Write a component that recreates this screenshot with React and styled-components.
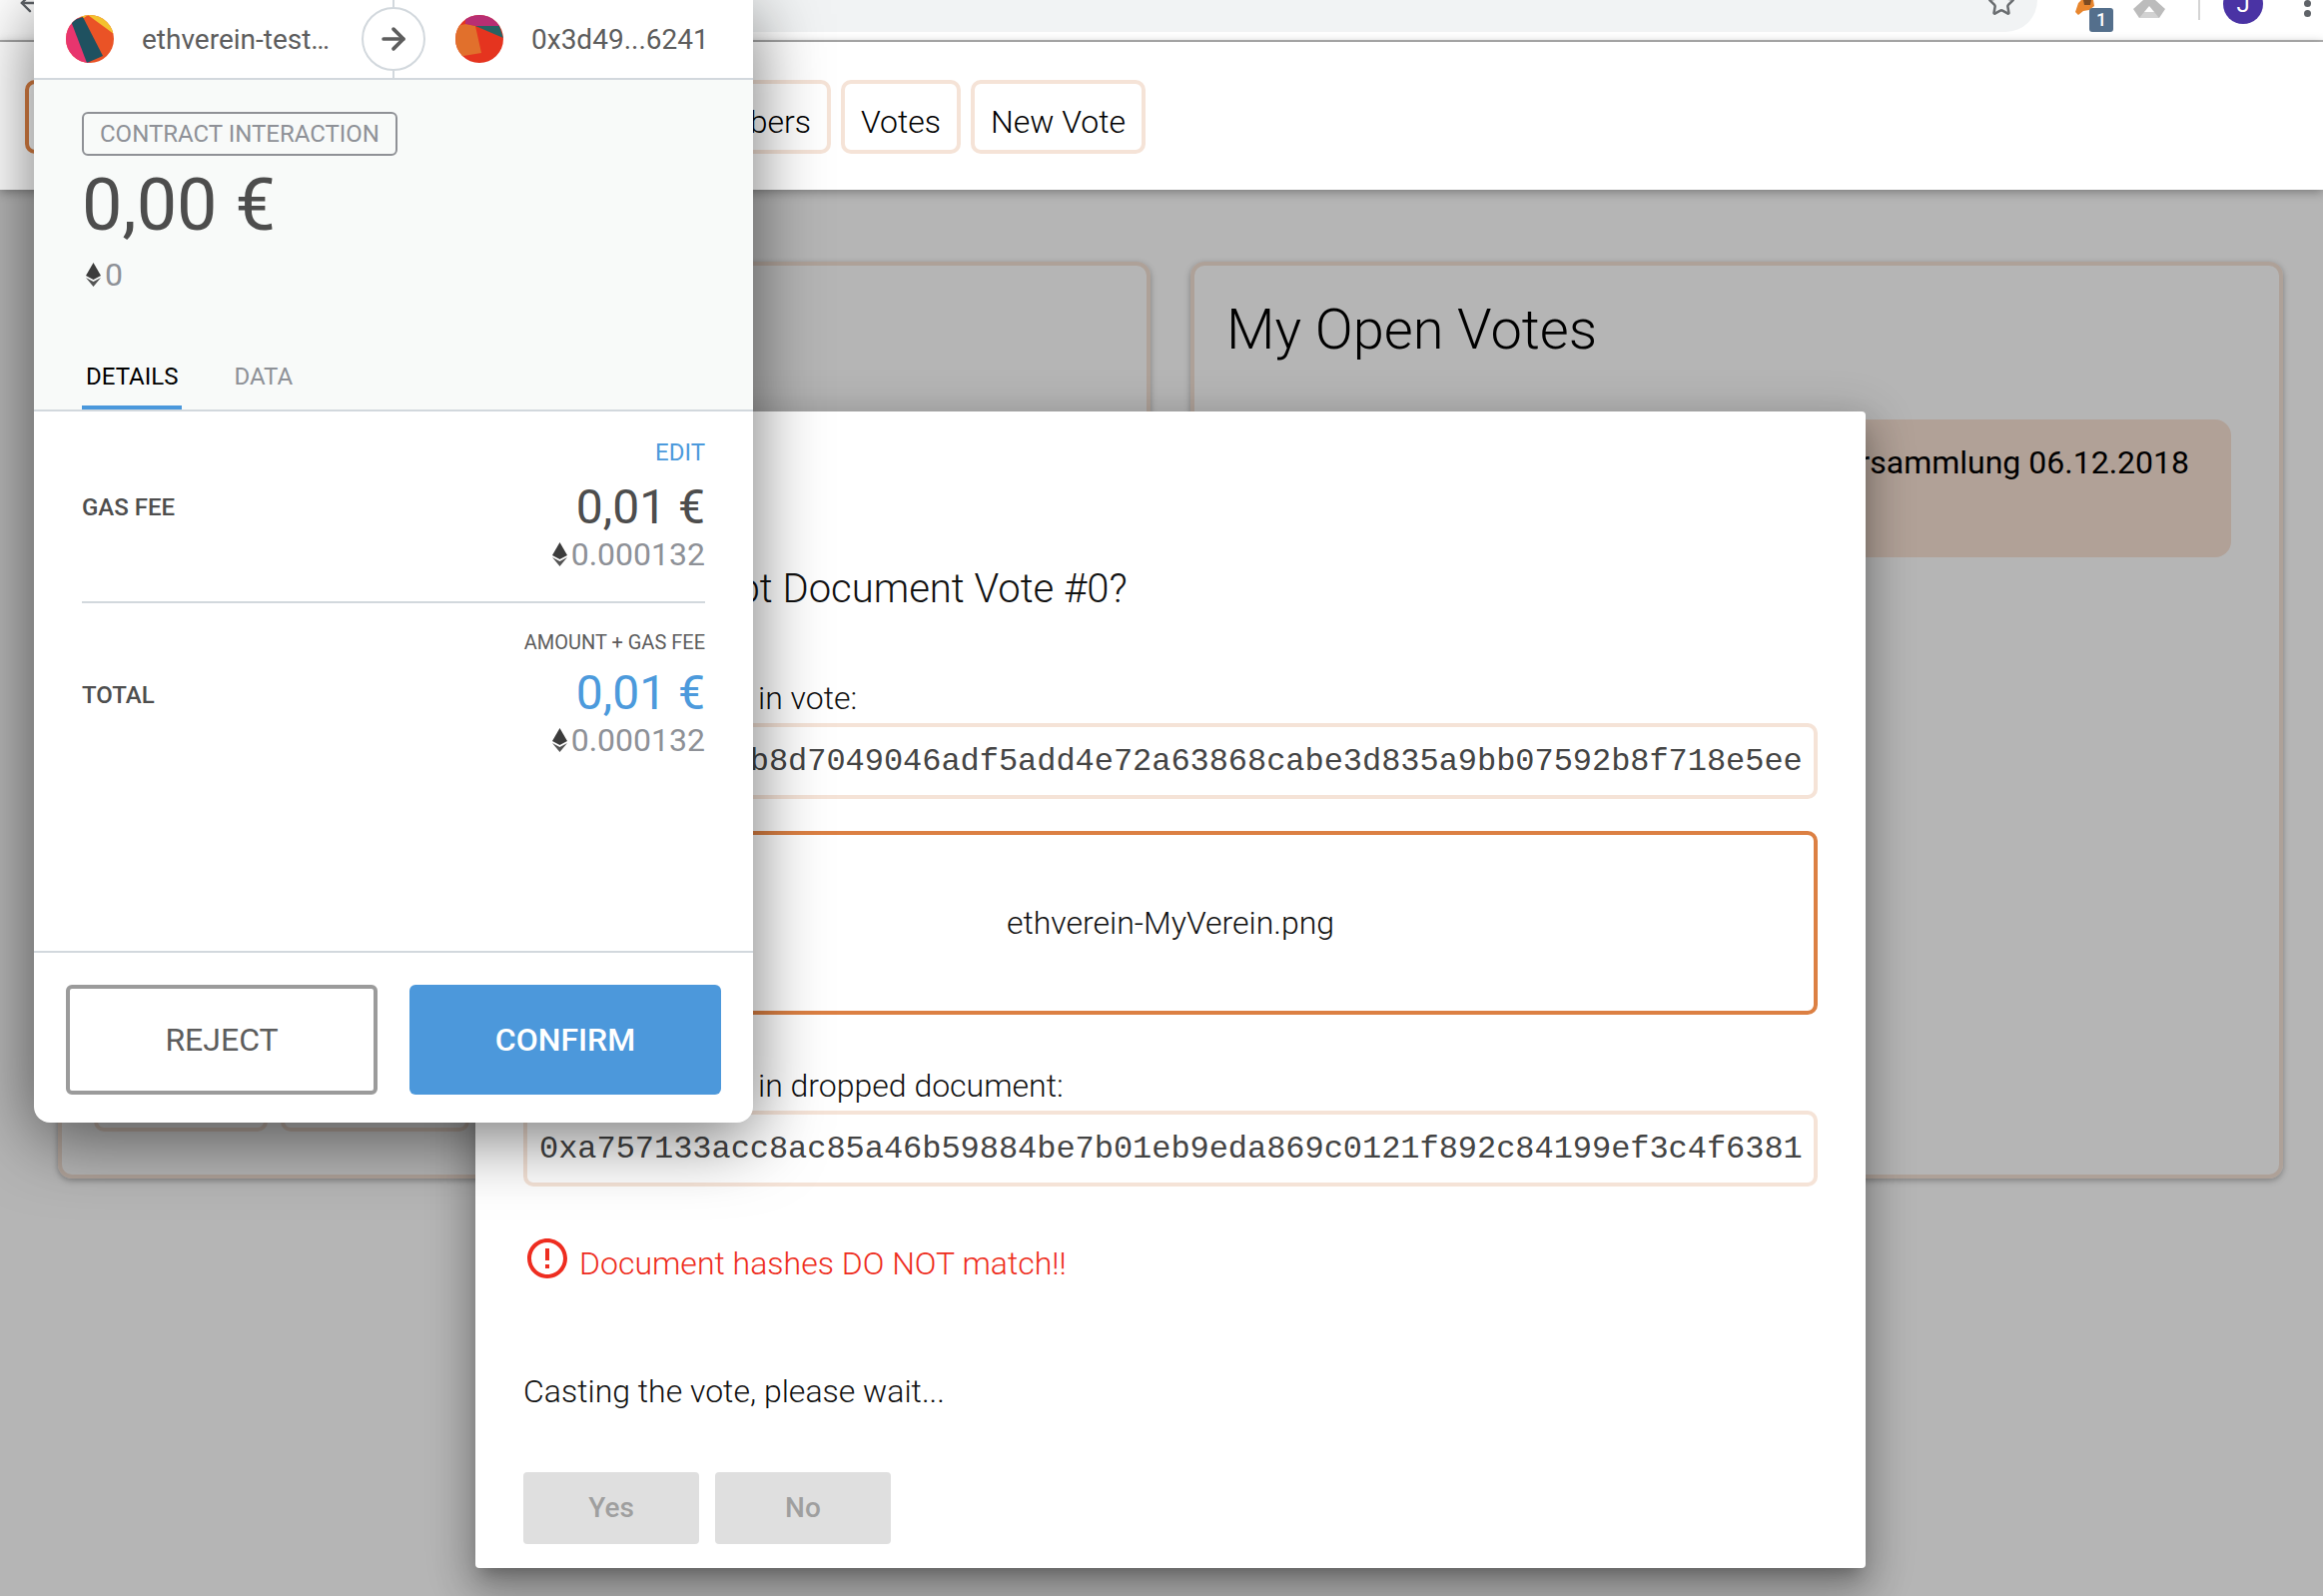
import React from "react";
import styled, { createGlobalStyle } from "styled-components";
import { ArrowLeft, ArrowRight, Star } from "lucide-react";
import { MdErrorOutline } from "react-icons/md";

const GlobalStyle = createGlobalStyle`
  html, body { margin: 0; padding: 0; background: #fff; }
  * { box-sizing: border-box; }
  body { font-family: Roboto, "Liberation Sans", sans-serif; }
`;

function EthIcon() {
  return (
    <EthSvg viewBox="0 0 15 24">
      <polygon points="7.5,0 15,13 7.5,17 0,13" fill="#3c3c3c" />
      <polygon points="0,15 7.5,19 15,15 7.5,24" fill="#555" />
    </EthSvg>
  );
}

function AccountIconA() {
  return (
    <AvatarSvg viewBox="0 0 48 48">
      <rect width="48" height="48" fill="#ea5326" />
      <polygon points="0,0 12,0 24,48 0,48" fill="#e8356e" />
      <polygon points="5,6 17,2 37,41 21,48" fill="#1f5160" />
      <polygon points="22,0 48,0 48,19" fill="#f3c22f" />
      <polygon points="14,0 22,0 18,3" fill="#f3c22f" />
    </AvatarSvg>
  );
}

function AccountIconB() {
  return (
    <AvatarSvg viewBox="0 0 48 48">
      <rect width="48" height="48" fill="#e5341f" />
      <polygon points="0,11 11,9 20,11 26,38 8,41 0,44" fill="#e1702c" />
      <polygon points="10,0 48,0 44,11 20,11 10,9" fill="#b82e73" />
      <polygon points="20,11 44,11 48,23" fill="#276262" />
    </AvatarSvg>
  );
}

function FoxIcon() {
  return (
    <ExtensionSvg viewBox="0 0 20 16" $width={20} $height={16}>
      <polygon points="0,12 3,3 6,0 18,0 19,6 14,10 8,11 3,15" fill="#e8862e" />
      <polygon points="8,0 16,0 15,5 9,5" fill="#7a4a22" />
    </ExtensionSvg>
  );
}

function DriveIcon() {
  return (
    <ExtensionSvg viewBox="0 0 32 18" $width={32} $height={18}>
      <polygon points="10,0 22,0 32,9 26,18 6,18 0,9" fill="#bcbcbc" />
      <polygon points="16,6 21,12 11,12" fill="#fff" />
      <polygon points="6,18 11,12 21,12 26,18" fill="#d2d2d2" />
    </ExtensionSvg>
  );
}

function Amounts({ label, value, blue, eth }) {
  return (
    <AmountColumn>
      <SmallNote $blue={label === "EDIT"}>{label}</SmallNote>
      <FeeValue $blue={blue}>{value}</FeeValue>
      <EthRow>
        <EthIcon />
        <EthValue>{eth}</EthValue>
      </EthRow>
    </AmountColumn>
  );
}

function App() {
  return (
    <Page>
      <GlobalStyle />
      <BrowserBar>
        <ArrowLeft size={28} color="#5f6368" style={{ marginTop: -11 }} />
        <UrlPill>
          <Star size={28} color="#6a6d70" strokeWidth={2.2} />
        </UrlPill>
        <Extensions>
          <FoxSlot>
            <FoxIcon />
            <Badge>1</Badge>
          </FoxSlot>
          <DriveIcon />
          <BarDivider />
          <Profile>J</Profile>
          <Dots>
            <i />
            <i />
          </Dots>
        </Extensions>
      </BrowserBar>

      <Nav>
        <TabRow>
          <NavTab $active>Home</NavTab>
          <NavTab>Members</NavTab>
          <NavTab>Votes</NavTab>
          <NavTab>New Vote</NavTab>
        </TabRow>
      </Nav>

      <Main>
        <Card>
          <CardActions>
            <GhostButton $width={174} />
            <GhostButton $width={189} />
          </CardActions>
        </Card>
        <Card>
          <CardTitle>My Open Votes</CardTitle>
          <VoteItem>Mitgliederversammlung 06.12.2018</VoteItem>
        </Card>
      </Main>

      <Backdrop />

      <Modal>
        <ModalTitle>Do you accept Document Vote #0?</ModalTitle>
        <FieldLabel $top={65}>Document Hash in vote:</FieldLabel>
        <HashField>0x3e91c07a2b8d7049046adf5add4e72a63868cabe3d835a9bb07592b8f718e5ee</HashField>
        <DropZone>ethverein-MyVerein.png</DropZone>
        <FieldLabel $top={51}>Document Hash in dropped document:</FieldLabel>
        <HashField>0xa757133acc8ac85a46b59884be7b01eb9eda869c0121f892c84199ef3c4f6381</HashField>
        <ErrorRow>
          <MdErrorOutline size={48} color="#ee2d20" />
          <ErrorText>Document hashes DO NOT match!!</ErrorText>
        </ErrorRow>
        <WaitText>Casting the vote, please wait...</WaitText>
        <ModalButtons>
          <DisabledButton>Yes</DisabledButton>
          <DisabledButton>No</DisabledButton>
        </ModalButtons>
      </Modal>

      <Popup>
        <PopupHeader>
          <Party>
            <AccountIconA />
            <PartyName>ethverein-test…</PartyName>
          </Party>
          <ArrowSlot>
            <ArrowCircle>
              <ArrowRight size={34} color="#5d5d5d" strokeWidth={2.6} />
            </ArrowCircle>
          </ArrowSlot>
          <Party $right>
            <AccountIconB />
            <PartyName>0x3d49...6241</PartyName>
          </Party>
        </PopupHeader>

        <Summary>
          <TypeTag>CONTRACT INTERACTION</TypeTag>
          <BigAmount>0,00 €</BigAmount>
          <EthRow $left>
            <EthIcon />
            <EthValue>0</EthValue>
          </EthRow>
          <PopupTabs>
            <PopupTab $active>DETAILS</PopupTab>
            <PopupTab>DATA</PopupTab>
          </PopupTabs>
        </Summary>

        <Details>
          <FeeRow>
            <FeeLabel $top={55}>GAS FEE</FeeLabel>
            <Amounts label="EDIT" value="0,01 €" eth="0.000132" />
          </FeeRow>
          <FeeRow $last>
            <FeeLabel $top={51}>TOTAL</FeeLabel>
            <Amounts label="AMOUNT + GAS FEE" value="0,01 €" eth="0.000132" blue />
          </FeeRow>
        </Details>

        <PopupFooter>
          <RejectButton>REJECT</RejectButton>
          <ConfirmButton>CONFIRM</ConfirmButton>
        </PopupFooter>
      </Popup>
    </Page>
  );
}

export default App;

//styling:

const Page = styled.div`
  position: relative;
  width: 2326px;
  height: 1598px;
  overflow: hidden;
  background: #fff;
`;

const BrowserBar = styled.div`
  position: relative;
  z-index: 3;
  height: 42px;
  display: flex;
  align-items: flex-start;
  padding-left: 16px;
  background: #fff;
  border-bottom: 2px solid #b4b4b4;
  overflow: hidden;
`;

const UrlPill = styled.div`
  width: 1840px;
  height: 32px;
  margin-left: 156px;
  padding-right: 22px;
  display: flex;
  justify-content: flex-end;
  background: #f1f3f4;
  border-radius: 0 0 32px 0;
  svg {
    margin-top: -11px;
  }
`;

const Extensions = styled.div`
  display: flex;
  align-items: flex-start;
  margin-left: 38px;
`;

const FoxSlot = styled.div`
  position: relative;
  width: 38px;
  height: 32px;
`;

const Badge = styled.div`
  position: absolute;
  left: 14px;
  top: 8px;
  width: 24px;
  height: 24px;
  border-radius: 3px;
  background: #546f8c;
  color: #fff;
  font-size: 18px;
  font-weight: 500;
  line-height: 24px;
  text-align: center;
`;

const ExtensionSvg = styled.svg`
  display: block;
  flex: none;
  width: ${(p) => p.$width}px;
  height: ${(p) => p.$height}px;
  ${Extensions} > & {
    margin-left: 20px;
  }
`;

const BarDivider = styled.div`
  width: 2px;
  height: 20px;
  margin-left: 33px;
  background: #d4d4d4;
`;

const Profile = styled.div`
  width: 40px;
  height: 40px;
  margin: -16px 0 0 23px;
  border-radius: 50%;
  background: #4a33a4;
  color: #fff;
  font-size: 24px;
  line-height: 40px;
  text-align: center;
`;

const Dots = styled.div`
  margin-left: 41px;
  display: flex;
  flex-direction: column;
  gap: 3px;
  i {
    display: block;
    width: 7px;
    height: 7px;
    border-radius: 50%;
    background: #5f6368;
  }
`;

const Nav = styled.div`
  position: relative;
  z-index: 3;
  height: 148px;
  padding: 38px 0 0 25px;
  background: #fff;
  box-shadow: 0 2px 10px rgba(0, 0, 0, 0.35);
`;

const TabRow = styled.div`
  width: 1122px;
  display: flex;
  gap: 10px;
`;

const NavTab = styled.div`
  flex: ${(p) => (p.$active ? 1 : "none")};
  height: 74px;
  padding: 15px 16px 0;
  border: 4px solid ${(p) => (p.$active ? "#dc8043" : "#f5e3d7")};
  border-radius: 10px;
  color: #000;
  font-size: 32px;
  font-weight: 300;
  line-height: 46px;
`;

const Main = styled.div`
  display: grid;
  grid-template-columns: 1094px 1094px;
  gap: 40px;
  padding: 72px 0 0 58px;
`;

const Card = styled.div`
  height: 918px;
  display: flex;
  flex-direction: column;
  padding: 0 48px 0 32px;
  border: 4px solid #f5e3d7;
  border-radius: 14px;
  box-shadow: 0 2px 6px rgba(0, 0, 0, 0.3);
`;

const CardActions = styled.div`
  margin-top: auto;
  padding-bottom: 43px;
  display: flex;
  gap: 13px;
`;

const GhostButton = styled.div`
  width: ${(p) => p.$width}px;
  height: 76px;
  border: 4px solid #f5e3d7;
  border-radius: 10px;
`;

const CardTitle = styled.h2`
  margin: 31px 0 0;
  color: #000;
  font-size: 56px;
  font-weight: 300;
  line-height: 66px;
`;

const VoteItem = styled.div`
  height: 138px;
  margin-top: 57px;
  padding: 23px 42px 0 0;
  border-radius: 16px;
  background: #fae3d5;
  color: #000;
  font-size: 32px;
  line-height: 40px;
  text-align: right;
`;

const Backdrop = styled.div`
  position: absolute;
  inset: 0;
  z-index: 2;
  background: rgba(0, 0, 0, 0.29);
`;

const Modal = styled.div`
  position: absolute;
  left: 476px;
  top: 412px;
  z-index: 4;
  width: 1392px;
  height: 1158px;
  padding: 154px 48px 24px;
  border-radius: 4px;
  background: #fff;
  box-shadow: 0 24px 38px 3px rgba(0, 0, 0, 0.2),
    0 9px 46px 8px rgba(0, 0, 0, 0.16), 0 11px 15px -7px rgba(0, 0, 0, 0.25);
`;

const ModalTitle = styled.h4`
  margin: 0;
  color: #111;
  font-size: 40px;
  font-weight: 300;
  line-height: 48px;
`;

const FieldLabel = styled.div`
  margin-top: ${(p) => p.$top}px;
  color: #111;
  font-size: 32px;
  font-weight: 300;
  line-height: 40px;
`;

const HashField = styled.div`
  height: 76px;
  margin-top: 5px;
  padding: 0 12px;
  display: flex;
  align-items: center;
  border: 4px solid #f5e3d7;
  border-radius: 10px;
  color: #444;
  font-family: "Liberation Mono", monospace;
  font-size: 32px;
  letter-spacing: -0.04px;
  white-space: nowrap;
`;

const DropZone = styled.div`
  height: 184px;
  margin-top: 32px;
  display: flex;
  align-items: center;
  justify-content: center;
  border: 4px solid #dc8043;
  border-radius: 10px;
  color: #111;
  font-size: 32px;
  font-weight: 300;
`;

const ErrorRow = styled.div`
  margin-top: 48px;
  display: flex;
  gap: 8px;
`;

const ErrorText = styled.div`
  padding-top: 9px;
  color: #ee2d20;
  font-size: 32px;
  font-weight: 300;
  line-height: 40px;
`;

const WaitText = styled.div`
  margin-top: 88px;
  color: #111;
  font-size: 32px;
  font-weight: 300;
  line-height: 40px;
`;

const ModalButtons = styled.div`
  margin-top: 61px;
  display: flex;
  gap: 16px;
`;

const DisabledButton = styled.div`
  width: 176px;
  height: 72px;
  border-radius: 4px;
  background: #dfdfdf;
  color: #9f9f9f;
  font-size: 28px;
  font-weight: 500;
  line-height: 72px;
  text-align: center;
`;

const Popup = styled.div`
  position: absolute;
  left: 34px;
  top: 0;
  z-index: 5;
  width: 720px;
  height: 1124px;
  display: flex;
  flex-direction: column;
  border-radius: 0 0 16px 16px;
  background: #fff;
  box-shadow: 0 14px 70px rgba(0, 0, 0, 0.55);
`;

const PopupHeader = styled.div`
  height: 80px;
  display: grid;
  grid-template-columns: 1fr 64px 1fr;
  border-bottom: 2px solid #d2d8dd;
`;

const Party = styled.div`
  display: flex;
  align-items: center;
  gap: 28px;
  padding-left: ${(p) => (p.$right ? 30 : 32)}px;
`;

const AvatarSvg = styled.svg`
  flex: none;
  width: 48px;
  height: 48px;
  border-radius: 50%;
`;

const PartyName = styled.div`
  color: #5d5d5d;
  font-size: 28px;
  white-space: nowrap;
`;

const ArrowSlot = styled.div`
  position: relative;
  display: flex;
  align-items: center;
  justify-content: center;
  &::before {
    content: "";
    position: absolute;
    left: 31px;
    top: 0;
    bottom: 0;
    width: 2px;
    background: #d2d8dd;
  }
`;

const ArrowCircle = styled.div`
  position: relative;
  width: 64px;
  height: 64px;
  display: flex;
  align-items: center;
  justify-content: center;
  border: 2px solid #d2d8dd;
  border-radius: 50%;
  background: #fff;
`;

const Summary = styled.div`
  height: 332px;
  display: flex;
  flex-direction: column;
  padding: 32px 48px 0;
  background: #f8faf9;
  border-bottom: 2px solid #d2d8dd;
`;

const TypeTag = styled.div`
  align-self: flex-start;
  height: 44px;
  padding: 0 16px;
  border: 2px solid #8f9196;
  border-radius: 6px;
  color: #8e9197;
  font-size: 24px;
  line-height: 40px;
`;

const BigAmount = styled.div`
  margin-top: 8px;
  color: #4d4d4d;
  font-size: 72px;
  line-height: 84px;
`;

const EthRow = styled.div`
  display: flex;
  align-items: center;
  gap: 4px;
  margin-top: ${(p) => (p.$left ? 9 : 1)}px;
  margin-left: ${(p) => (p.$left ? 4 : 0)}px;
`;

const EthSvg = styled.svg`
  flex: none;
  width: 15px;
  height: 24px;
`;

const EthValue = styled.div`
  color: #8e9197;
  font-size: 32px;
  line-height: 36px;
`;

const PopupTabs = styled.div`
  margin-top: auto;
  display: flex;
  gap: 48px;
`;

const PopupTab = styled.div`
  height: 49px;
  padding: 0 4px;
  border-bottom: 4px solid ${(p) => (p.$active ? "#4a98dc" : "transparent")};
  color: ${(p) => (p.$active ? "#000" : "#8e9197")};
  font-size: 24px;
  line-height: 32px;
`;

const Details = styled.div`
  padding: 25px 48px 0;
`;

const FeeRow = styled.div`
  display: flex;
  justify-content: space-between;
  padding-bottom: ${(p) => (p.$last ? 0 : 29)}px;
  margin-bottom: ${(p) => (p.$last ? 0 : 25)}px;
  border-bottom: ${(p) => (p.$last ? "none" : "2px solid #d2d8dd")};
`;

const FeeLabel = styled.div`
  margin-top: ${(p) => p.$top}px;
  color: #4e4e4e;
  font-size: 24px;
  font-weight: 500;
  line-height: 32px;
`;

const AmountColumn = styled.div`
  display: flex;
  flex-direction: column;
  align-items: flex-end;
`;

const SmallNote = styled.div`
  height: ${(p) => (p.$blue ? 32 : 28)}px;
  color: ${(p) => (p.$blue ? "#4c9adc" : "#5d5d5d")};
  font-size: ${(p) => (p.$blue ? 24 : 20)}px;
  line-height: ${(p) => (p.$blue ? 32 : 28)}px;
  margin-bottom: ${(p) => (p.$blue ? 11 : 9)}px;
`;

const FeeValue = styled.div`
  color: ${(p) => (p.$blue ? "#4c9adc" : "#4d4d4d")};
  font-size: 48px;
  line-height: 56px;
`;

const PopupFooter = styled.div`
  margin-top: auto;
  padding: 32px 32px 28px;
  display: flex;
  gap: 32px;
  border-top: 2px solid #d2d8dd;
`;

const RejectButton = styled.div`
  width: 312px;
  height: 110px;
  border: 4px solid #9b9b9b;
  border-radius: 6px;
  color: #5d5d5d;
  font-size: 32px;
  line-height: 102px;
  text-align: center;
`;

const ConfirmButton = styled.div`
  width: 312px;
  height: 110px;
  border-radius: 6px;
  background: #4c98db;
  color: #fff;
  font-size: 32px;
  font-weight: 500;
  line-height: 110px;
  text-align: center;
`;
